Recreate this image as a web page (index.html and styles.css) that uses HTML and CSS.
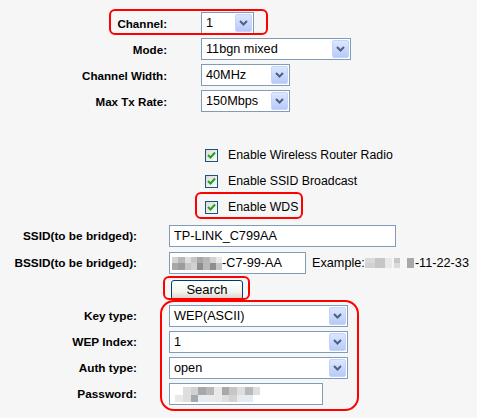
FILE: index.html
```html
<!DOCTYPE html>
<html>
<head>
<meta charset="utf-8">
<title>Wireless Settings</title>
<link rel="stylesheet" href="styles.css">
</head>
<body>
<div class="page">
  <div class="sec top">
    <div class="row">
      <div class="lbl">Channel:</div>
      <div class="sel w-ch"><span class="val">1</span><span class="arr"><svg width="9" height="6" viewBox="0 0 9 6"><path d="M1 1 L4.5 4.5 L8 1" fill="none" stroke="#4d6185" stroke-width="2"/></svg></span></div>
    </div>
    <div class="row">
      <div class="lbl">Mode:</div>
      <div class="sel w-mode"><span class="val">11bgn mixed</span><span class="arr"><svg width="9" height="6" viewBox="0 0 9 6"><path d="M1 1 L4.5 4.5 L8 1" fill="none" stroke="#4d6185" stroke-width="2"/></svg></span></div>
    </div>
    <div class="row">
      <div class="lbl">Channel Width:</div>
      <div class="sel w-mid"><span class="val">40MHz</span><span class="arr"><svg width="9" height="6" viewBox="0 0 9 6"><path d="M1 1 L4.5 4.5 L8 1" fill="none" stroke="#4d6185" stroke-width="2"/></svg></span></div>
    </div>
    <div class="row">
      <div class="lbl">Max Tx Rate:</div>
      <div class="sel w-mid"><span class="val">150Mbps</span><span class="arr"><svg width="9" height="6" viewBox="0 0 9 6"><path d="M1 1 L4.5 4.5 L8 1" fill="none" stroke="#4d6185" stroke-width="2"/></svg></span></div>
    </div>
  </div>

  <div class="sec checks">
    <div class="crow"><span class="cb"><svg width="9" height="8" viewBox="0 0 9 8"><path d="M1 4 L3.5 6.5 L8 1.5" fill="none" stroke="#21a121" stroke-width="2"/></svg></span><span class="ctext">Enable Wireless Router Radio</span></div>
    <div class="crow"><span class="cb"><svg width="9" height="8" viewBox="0 0 9 8"><path d="M1 4 L3.5 6.5 L8 1.5" fill="none" stroke="#21a121" stroke-width="2"/></svg></span><span class="ctext">Enable SSID Broadcast</span></div>
    <div class="crow"><span class="cb"><svg width="9" height="8" viewBox="0 0 9 8"><path d="M1 4 L3.5 6.5 L8 1.5" fill="none" stroke="#21a121" stroke-width="2"/></svg></span><span class="ctext">Enable WDS</span></div>
  </div>

  <div class="sec bottom">
    <div class="row2 tall">
      <div class="lbl2">SSID(to be bridged):</div>
      <div class="inp w-ssid"><span class="val">TP-LINK_C799AA</span></div>
    </div>
    <div class="row2 tall">
      <div class="lbl2">BSSID(to be bridged):</div>
      <div class="inp w-bssid">
        <span class="mosaic m8">
          <i class="c3"></i><i class="c5"></i><i class="c2"></i><i class="c4"></i><i class="c6"></i><i class="c5"></i><i class="c3"></i><i class="c1"></i>
          <i class="c6"></i><i class="c7"></i><i class="c4"></i><i class="c3"></i><i class="c8"></i><i class="c5"></i><i class="c8"></i><i class="c4"></i>
        </span><span class="val">-C7-99-AA</span>
      </div>
      <div class="example">Example:<span class="mosaic mex">
          <i class="c9"></i><i class="c4"></i><i class="c1"></i><i class="c0"></i><i class="c4"></i><i class="c0"></i><i class="c6"></i>
          <i class="c3"></i><i class="c4"></i><i class="c1"></i><i class="c0"></i><i class="c9"></i><i class="c0"></i><i class="c6"></i>
        </span>-11-22-33</div>
    </div>
    <div class="row2 tall">
      <div class="lbl2"></div>
      <button class="btn">Search</button>
    </div>
    <div class="row2">
      <div class="lbl2">Key type:</div>
      <div class="sel w-key"><span class="val">WEP(ASCII)</span><span class="arr"><svg width="9" height="6" viewBox="0 0 9 6"><path d="M1 1 L4.5 4.5 L8 1" fill="none" stroke="#4d6185" stroke-width="2"/></svg></span></div>
    </div>
    <div class="row2">
      <div class="lbl2">WEP Index:</div>
      <div class="sel w-key"><span class="val">1</span><span class="arr"><svg width="9" height="6" viewBox="0 0 9 6"><path d="M1 1 L4.5 4.5 L8 1" fill="none" stroke="#4d6185" stroke-width="2"/></svg></span></div>
    </div>
    <div class="row2">
      <div class="lbl2">Auth type:</div>
      <div class="sel w-key"><span class="val">open</span><span class="arr"><svg width="9" height="6" viewBox="0 0 9 6"><path d="M1 1 L4.5 4.5 L8 1" fill="none" stroke="#4d6185" stroke-width="2"/></svg></span></div>
    </div>
    <div class="row2">
      <div class="lbl2">Password:</div>
      <div class="inp w-pass">
        <span class="mosaic mpw">
          <i class="c0"></i><i class="c2"></i><i class="c3"></i><i class="c6"></i><i class="c5"></i><i class="c1"></i><i class="c6"></i><i class="c4"></i><i class="c2"></i><i class="c5"></i><i class="c2"></i><i class="c0"></i>
          <i class="c1"></i><i class="c2"></i><i class="c6"></i><i class="cb1"></i><i class="cb1"></i><i class="c1"></i><i class="c2"></i><i class="c3"></i><i class="cb1"></i><i class="cb1"></i><i class="c0"></i><i class="c0"></i>
        </span>
      </div>
    </div>
  </div>

  <div class="mark mk-ch"></div>
  <div class="mark mk-wds"></div>
  <div class="mark mk-search"></div>
  <div class="mark mk-sec"></div>
</div>
</body>
</html>
```

FILE: styles.css
```css
html, body {
  margin: 0;
  padding: 0;
  background: #f6f6f6;
}
body {
  font-family: "Liberation Sans", Arial, sans-serif;
  color: #000;
}
.page {
  position: relative;
  width: 477px;
  height: 418px;
  overflow: hidden;
}
.sec.top {
  padding-top: 10px;
}
.row {
  height: 26px;
  display: flex;
  align-items: center;
}
.lbl {
  width: 167px;
  text-align: right;
  font-weight: bold;
  font-size: 11.6px;
  margin-right: 34px;
}
.sel, .inp {
  box-sizing: border-box;
  height: 22px;
  border: 1px solid #7f9db9;
  background: #fff;
  display: flex;
  align-items: center;
  font-size: 12.7px;
}
.sel .val {
  flex: 1;
  padding-left: 4px;
  white-space: nowrap;
  overflow: hidden;
}
.arr {
  box-sizing: border-box;
  width: 17px;
  height: 18px;
  margin-right: 1px;
  border: 1px solid #c3d3fd;
  border-radius: 2px;
  background: linear-gradient(to bottom, #dce6fe, #b7caf7);
  display: flex;
  align-items: center;
  justify-content: center;
}
.arr svg { display: block; }
.w-ch { width: 53px; }
.w-mode { width: 150px; }
.w-mid { width: 89px; }
.w-key { width: 179px; }
.w-ssid { width: 227px; }
.w-bssid { width: 137px; }
.w-pass { width: 154px; }
.inp .val {
  padding-left: 4px;
  white-space: nowrap;
}
.w-bssid .val { padding-left: 0; }

.sec.checks {
  margin-top: 28px;
}
.crow {
  height: 26px;
  display: flex;
  align-items: center;
  padding-left: 205px;
}
.cb {
  box-sizing: border-box;
  width: 13px;
  height: 13px;
  border: 1px solid #1c5180;
  background: linear-gradient(135deg, #dcdcd7, #fbfbfa);
  display: flex;
  align-items: center;
  justify-content: center;
  margin-right: 10px;
}
.cb svg { display: block; }
.ctext {
  font-size: 12.3px;
}

.sec.bottom {
  margin-top: 2px;
}
.row2 {
  height: 26px;
  display: flex;
  align-items: center;
}
.row2.tall { height: 27px; }
.lbl2 {
  width: 137px;
  text-align: right;
  font-weight: bold;
  font-size: 11.8px;
  margin-right: 32px;
  flex: none;
}
.example {
  margin-left: 6px;
  font-size: 12.7px;
  display: flex;
  align-items: center;
  white-space: nowrap;
}
.btn {
  box-sizing: border-box;
  margin-left: 2px;
  width: 72px;
  height: 20px;
  border: 1px solid #003c74;
  border-radius: 3px;
  background: linear-gradient(to bottom, #ffffff, #f3f3ef 60%, #d6d0c5);
  font-family: "Liberation Sans", Arial, sans-serif;
  font-size: 13px;
  color: #000;
  padding: 0;
}
.mosaic {
  display: inline-grid;
  grid-auto-rows: 7px;
}
.mosaic i { display: block; }
.m8 {
  grid-template-columns: repeat(8, 6.25px);
  grid-template-rows: 6px 7px;
  margin-left: 2px;
  margin-top: 2px;
}
.mex {
  grid-template-columns: 10px 10px 7px 2px 6px 7px 7px;
  grid-template-rows: 5px 5px;
  grid-auto-rows: 5px;
  margin-right: 1px;
}
.mpw {
  grid-template-columns: repeat(12, 7.75px);
  grid-template-rows: 8px 7px;
  margin-left: 5px;
}
.c0 { background: #ffffff00; }
.c1 { background: #e9e9e9; }
.c2 { background: #dedede; }
.c3 { background: #d2d2d2; }
.c4 { background: #c6c6c6; }
.c5 { background: #b8b8b8; }
.c6 { background: #a8a8a8; }
.c7 { background: #9c9c9c; }
.c8 { background: #8e8e8e; }
.c9 { background: #dadada; }
.cb1 { background: #e6ebf2; }

.mark {
  position: absolute;
  box-sizing: border-box;
  border: 2px solid #f00;
  border-radius: 6px;
  pointer-events: none;
}
.mk-ch { left: 109px; top: 9px; width: 159px; height: 26px; }
.mk-wds { left: 195px; top: 192px; width: 108px; height: 27px; }
.mk-search { left: 163px; top: 276px; width: 87px; height: 24px; }
.mk-sec { left: 160px; top: 300px; width: 199px; height: 111px; border-radius: 14px; }
```
